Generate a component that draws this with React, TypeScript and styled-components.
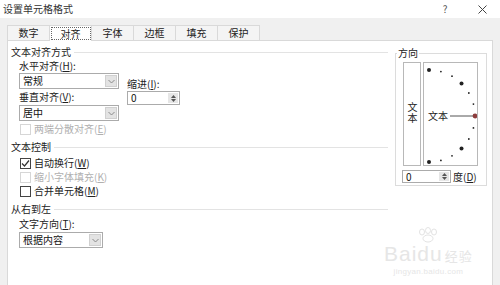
import React from "react";
import styled, { createGlobalStyle } from "styled-components";

const GlobalStyle = createGlobalStyle`
  html, body {
    margin: 0;
    padding: 0;
    background: #f0f0f0;
  }
  body {
    font-family: "Noto Sans CJK SC", "DejaVu Sans", sans-serif;
    font-size: 10px;
    color: #222;
  }
`;

const Window = styled.div`
  width: 500px;
  height: 285px;
  overflow: hidden;
  display: flex;
  flex-direction: column;
  background: #f0f0f0;
`;

const TitleBar = styled.div`
  height: 18px;
  flex: none;
  background: #fff;
  display: flex;
  align-items: center;
  padding: 0 13px 0 3px;
  line-height: 12px;
  color: #333;
`;

const Title = styled.div`
  flex: 1;
`;

const TitleButton = styled.span<{ $gap?: number }>`
  width: 10px;
  display: flex;
  justify-content: center;
  color: #555;
  margin-left: ${(p) => p.$gap ?? 0}px;
`;

const TabStrip = styled.div`
  height: 22px;
  flex: none;
  padding-left: 7px;
  display: flex;
  align-items: flex-end;
`;

const Tab = styled.div<{ $active?: boolean }>`
  width: 43px;
  height: ${(p) => (p.$active ? 16 : 15)}px;
  box-sizing: border-box;
  margin-left: -1px;
  margin-bottom: ${(p) => (p.$active ? -1 : 0)}px;
  border: 1px solid #d9d9d9;
  border-bottom: none;
  background: ${(p) => (p.$active ? "#fff" : "#f4f4f4")};
  display: flex;
  align-items: center;
  justify-content: center;
  position: relative;
  z-index: ${(p) => (p.$active ? 2 : 1)};
  line-height: 12px;
  &:first-child {
    margin-left: 0;
  }
`;

const FocusBox = styled.span`
  outline: 1px dotted #666;
  padding: 0 9px;
  line-height: 11px;
`;

const Panel = styled.div`
  flex: 1;
  margin: 0 7px;
  background: #fff;
  border: 1px solid #d9d9d9;
  border-bottom: none;
  display: flex;
  align-items: flex-start;
  padding-top: 5px;
  position: relative;
`;

const LeftColumn = styled.div`
  width: 379px;
  padding-left: 3px;
  display: flex;
  flex-direction: column;
`;

const SectionHeader = styled.div<{ $top?: number }>`
  display: flex;
  align-items: center;
  height: 12px;
  line-height: 12px;
  gap: 3px;
  margin-top: ${(p) => p.$top ?? 0}px;
  margin-right: 2px;
`;

const Rule = styled.div`
  flex: 1;
  height: 1px;
  background: #e3e3e3;
`;

const Indented = styled.div`
  padding-left: 8px;
  display: flex;
  flex-direction: column;
`;

const Label = styled.div<{ $top?: number }>`
  height: 12px;
  line-height: 12px;
  margin-top: ${(p) => p.$top ?? 0}px;
  white-space: nowrap;
  color: #222;
`;

const Key = styled.span`
  text-decoration: underline;
`;

const AlignRow = styled.div`
  display: flex;
  gap: 8px;
`;

const SubColumn = styled.div<{ $top?: number; $width: number }>`
  width: ${(p) => p.$width}px;
  padding-top: ${(p) => p.$top ?? 0}px;
  display: flex;
  flex-direction: column;
`;

const Select = styled.div<{ $width: number; $top?: number }>`
  width: ${(p) => p.$width}px;
  height: 16px;
  box-sizing: border-box;
  margin-top: ${(p) => p.$top ?? 0}px;
  border: 1px solid #ababab;
  background: #fff;
  display: flex;
  align-items: center;
`;

const FieldValue = styled.div`
  flex: 1;
  padding-left: 3px;
  line-height: 12px;
  color: #111;
`;

const DropButton = styled.div`
  width: 12px;
  height: 12px;
  margin-right: 1px;
  background: #e3e3e3;
  border: 1px solid #d0d0d0;
  box-sizing: border-box;
  display: flex;
  align-items: center;
  justify-content: center;
`;

const Spin = styled.div<{ $width: number; $height: number; $top?: number }>`
  width: ${(p) => p.$width}px;
  height: ${(p) => p.$height}px;
  box-sizing: border-box;
  margin-top: ${(p) => p.$top ?? 0}px;
  border: 1px solid #ababab;
  background: #fff;
  display: flex;
  align-items: center;
  flex: none;
`;

const SpinButtons = styled.div`
  width: 10px;
  height: calc(100% - 2px);
  margin-right: 1px;
  background: #e6e6e6;
  display: flex;
  flex-direction: column;
  align-items: center;
  justify-content: center;
  gap: 1px;
`;

const CheckRow = styled.div<{ $height?: number; $top?: number }>`
  display: flex;
  align-items: center;
  gap: 3px;
  height: ${(p) => p.$height ?? 14}px;
  margin-top: ${(p) => p.$top ?? 0}px;
  padding-left: 1px;
  line-height: 12px;
`;

const Box = styled.div<{ $disabled?: boolean }>`
  width: 11px;
  height: 11px;
  box-sizing: border-box;
  border: 1px solid ${(p) => (p.$disabled ? "#d6d6d6" : "#444")};
  background: #fff;
  display: flex;
  align-items: center;
  justify-content: center;
`;

const CheckText = styled.span<{ $disabled?: boolean }>`
  color: ${(p) => (p.$disabled ? "#b0b0b0" : "#222")};
`;

const Group = styled.fieldset`
  margin: 1px 0 0 5px;
  width: 92px;
  box-sizing: border-box;
  padding: 3px 8px 2px 7px;
  border: 1px solid #dcdcdc;
  min-width: 0;
`;

const Legend = styled.legend`
  padding: 0 1px;
  margin-left: -6px;
  line-height: 12px;
  height: 12px;
`;

const DirectionRow = styled.div`
  display: flex;
  gap: 2px;
`;

const VerticalBox = styled.div`
  width: 18px;
  height: 104px;
  box-sizing: border-box;
  border: 1px solid #b8b8b8;
  display: flex;
  align-items: center;
  justify-content: center;
  padding-bottom: 2px;
`;

const VerticalText = styled.span`
  writing-mode: vertical-rl;
  letter-spacing: 1px;
  line-height: 12px;
`;

const DialBox = styled.div`
  width: 55px;
  height: 104px;
  box-sizing: border-box;
  border: 1px solid #b8b8b8;
  display: flex;
`;

const DegreeRow = styled.div`
  display: flex;
  align-items: center;
  gap: 2px;
  margin: 4px 0 0 -1px;
  line-height: 12px;
`;

const Watermark = styled.div`
  position: absolute;
  left: 376px;
  top: 186px;
  display: flex;
  flex-direction: column;
  align-items: center;
  color: #e6e6e6;
  pointer-events: none;
`;

const WatermarkBrand = styled.div`
  font-family: "Liberation Sans", sans-serif;
  font-size: 21px;
  line-height: 22px;
  letter-spacing: 1px;
  display: flex;
  align-items: baseline;
`;

const WatermarkCn = styled.span`
  font-family: "Noto Sans CJK SC", sans-serif;
  font-size: 13px;
  margin-left: 2px;
`;

const WatermarkUrl = styled.div`
  font-family: "Liberation Sans", sans-serif;
  font-size: 8px;
  line-height: 10px;
  letter-spacing: 0.3px;
`;

const Chevron = () => (
  <svg width="7" height="5" viewBox="0 0 7 5">
    <path d="M0.5 1 L3.5 4 L6.5 1" fill="none" stroke="#8a8a8a" strokeWidth="1" />
  </svg>
);

const SpinArrows = () => (
  <SpinButtons>
    <svg width="5" height="3" viewBox="0 0 5 3">
      <path d="M0 3 L2.5 0 L5 3 Z" fill="#555" />
    </svg>
    <svg width="5" height="3" viewBox="0 0 5 3">
      <path d="M0 0 L2.5 3 L5 0 Z" fill="#555" />
    </svg>
  </SpinButtons>
);

const CheckMark = () => (
  <svg width="9" height="9" viewBox="0 0 9 9">
    <path d="M1 4.5 L3.5 7 L8 1.5" fill="none" stroke="#333" strokeWidth="1.2" />
  </svg>
);

// orientation dial: dots every 15 degrees on a half circle, red marker at 0
const Dial = () => {
  const cx = 5;
  const cy = 53;
  const r = 46;
  const dots = [];
  for (let a = 90; a >= -90; a -= 15) {
    if (a === 0) continue;
    const rad = (a * Math.PI) / 180;
    const big = a % 45 === 0;
    dots.push(
      <circle
        key={a}
        cx={cx + r * Math.cos(rad)}
        cy={cy - r * Math.sin(rad)}
        r={big ? 2 : 0.9}
        fill="#222"
      />
    );
  }
  return (
    <svg width="53" height="102" viewBox="0 0 53 102">
      {dots}
      <text x="4" y="57" fontSize="10" fontFamily="Noto Sans CJK SC, sans-serif" fill="#222">
        文本
      </text>
      <line x1="26" y1="53" x2="49" y2="53" stroke="#555" strokeWidth="1" />
      <circle cx={cx + r} cy={cy} r="2.4" fill="#8c3c3c" />
    </svg>
  );
};

const Paw = () => (
  <svg width="26" height="16" viewBox="0 0 26 16">
    <g fill="none" stroke="#e3e3e3" strokeWidth="1">
      <ellipse cx="7" cy="5" rx="2.5" ry="3" />
      <ellipse cx="13" cy="3.5" rx="2.5" ry="3" />
      <ellipse cx="19" cy="5" rx="2.5" ry="3" />
      <ellipse cx="13" cy="11.5" rx="5" ry="3.5" />
    </g>
  </svg>
);

const tabs = ["数字", "对齐", "字体", "边框", "填充", "保护"];

export default function App() {
  return (
    <>
      <GlobalStyle />
      <Window>
        <TitleBar>
          <Title>设置单元格格式</Title>
          <TitleButton>?</TitleButton>
          <TitleButton $gap={27}>
            <svg width="9" height="9" viewBox="0 0 9 9">
              <path d="M0.5 0.5 L8.5 8.5 M8.5 0.5 L0.5 8.5" stroke="#444" strokeWidth="1" />
            </svg>
          </TitleButton>
        </TitleBar>

        <TabStrip>
          {tabs.map((t) => (
            <Tab key={t} $active={t === "对齐"}>
              {t === "对齐" ? <FocusBox>{t}</FocusBox> : t}
            </Tab>
          ))}
        </TabStrip>

        <Panel>
          <LeftColumn>
            <SectionHeader>
              <span>文本对齐方式</span>
              <Rule />
            </SectionHeader>
            <Indented>
              <AlignRow>
                <SubColumn $width={100}>
                  <Label $top={2}>
                    水平对齐(<Key>H</Key>):
                  </Label>
                  <Select $width={100} $top={1}>
                    <FieldValue>常规</FieldValue>
                    <DropButton>
                      <Chevron />
                    </DropButton>
                  </Select>
                  <Label $top={2}>
                    垂直对齐(<Key>V</Key>):
                  </Label>
                  <Select $width={100} $top={2}>
                    <FieldValue>居中</FieldValue>
                    <DropButton>
                      <Chevron />
                    </DropButton>
                  </Select>
                </SubColumn>
                <SubColumn $width={53} $top={20}>
                  <Label>
                    缩进(<Key>I</Key>):
                  </Label>
                  <Spin $width={53} $height={14} $top={1}>
                    <FieldValue>0</FieldValue>
                    <SpinArrows />
                  </Spin>
                </SubColumn>
              </AlignRow>
              <CheckRow $height={12} $top={2}>
                <Box $disabled />
                <CheckText $disabled>
                  两端分散对齐(<Key>E</Key>)
                </CheckText>
              </CheckRow>
            </Indented>

            <SectionHeader $top={6}>
              <span>文本控制</span>
              <Rule />
            </SectionHeader>
            <Indented>
              <CheckRow $top={3}>
                <Box>
                  <CheckMark />
                </Box>
                <CheckText>
                  自动换行(<Key>W</Key>)
                </CheckText>
              </CheckRow>
              <CheckRow>
                <Box $disabled />
                <CheckText $disabled>
                  缩小字体填充(<Key>K</Key>)
                </CheckText>
              </CheckRow>
              <CheckRow>
                <Box />
                <CheckText>
                  合并单元格(<Key>M</Key>)
                </CheckText>
              </CheckRow>
            </Indented>

            <SectionHeader $top={5}>
              <span>从右到左</span>
              <Rule />
            </SectionHeader>
            <Indented>
              <Label $top={3}>
                文字方向(<Key>T</Key>):
              </Label>
              <Select $width={84} $top={2}>
                <FieldValue>根据内容</FieldValue>
                <DropButton>
                  <Chevron />
                </DropButton>
              </Select>
            </Indented>
          </LeftColumn>

          <Group>
            <Legend>方向</Legend>
            <DirectionRow>
              <VerticalBox>
                <VerticalText>文本</VerticalText>
              </VerticalBox>
              <DialBox>
                <Dial />
              </DialBox>
            </DirectionRow>
            <DegreeRow>
              <Spin $width={49} $height={13}>
                <FieldValue>0</FieldValue>
                <SpinArrows />
              </Spin>
              <span>
                度(<Key>D</Key>)
              </span>
            </DegreeRow>
          </Group>

          <Watermark>
            <Paw />
            <WatermarkBrand>
              Baidu<WatermarkCn>经验</WatermarkCn>
            </WatermarkBrand>
            <WatermarkUrl>jingyan.baidu.com</WatermarkUrl>
          </Watermark>
        </Panel>
      </Window>
    </>
  );
}
